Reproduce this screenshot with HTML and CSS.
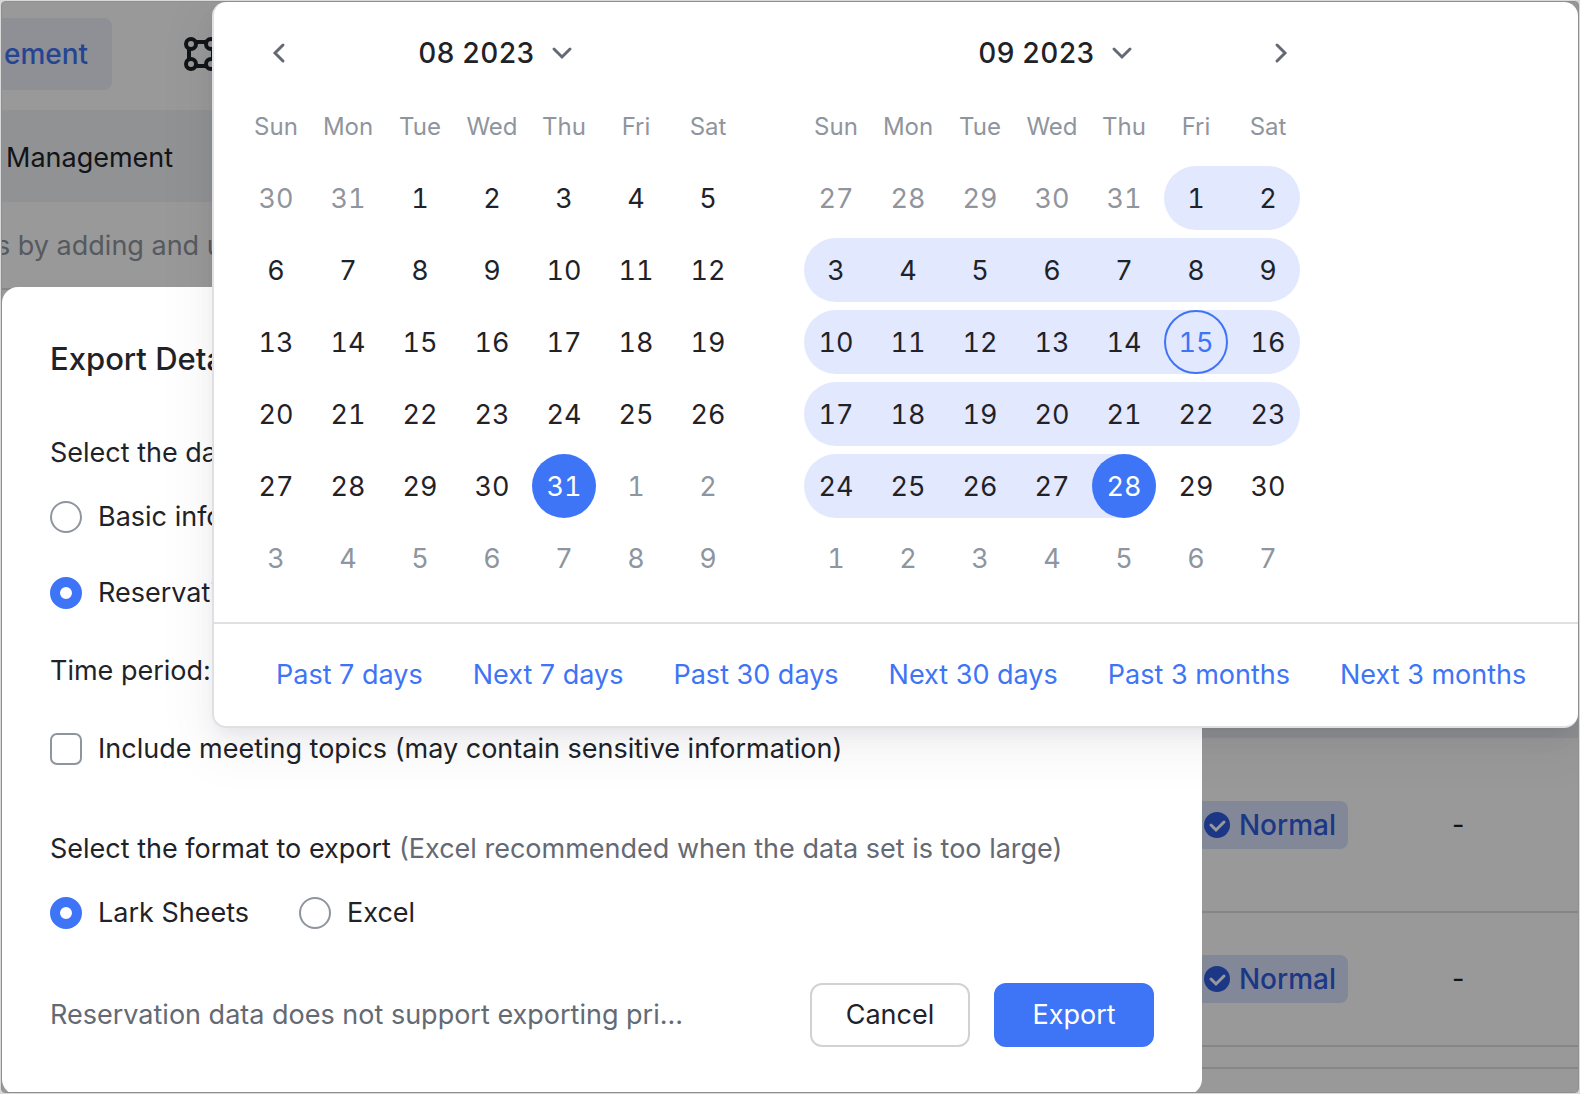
FILE: index.html
```html
<!DOCTYPE html>
<html lang="en">
<head>
    <meta charset="UTF-8">
    <meta name="viewport" content="width=device-width, initial-scale=1.0">
    <title>Export Details</title>
    <link rel="stylesheet" href="styles.css">
</head>
<body>
    <div class="frame">
        <div class="app">
            <nav class="topbar">
                <a class="nav-item active" href="#">ement</a>
                <svg class="nav-icon" viewBox="0 0 34 34" aria-hidden="true">
                    <path d="M11 5h12M11 29h12M5 11v12M29 11v12"/>
                    <circle cx="7" cy="7" r="5"/>
                    <circle cx="27" cy="7" r="5"/>
                    <circle cx="7" cy="27" r="5"/>
                    <circle cx="27" cy="27" r="5"/>
                </svg>
            </nav>
            <div class="subbar">Management</div>
            <p class="description">s by adding and u</p>

            <table class="rooms">
                <thead>
                    <tr><th></th><th class="col-note"></th></tr>
                </thead>
                <tbody>
                    <tr class="row-first">
                        <td>
                            <span class="badge">
                                <svg viewBox="0 0 26 26" aria-hidden="true"><circle cx="13" cy="13" r="13"/><path d="M7 13l5 5 8-8"/></svg>
                                Normal
                            </span>
                        </td>
                        <td class="col-note">-</td>
                    </tr>
                    <tr>
                        <td>
                            <span class="badge">
                                <svg viewBox="0 0 26 26" aria-hidden="true"><circle cx="13" cy="13" r="13"/><path d="M7 13l5 5 8-8"/></svg>
                                Normal
                            </span>
                        </td>
                        <td class="col-note">-</td>
                    </tr>
                </tbody>
            </table>
            <div class="pager"></div>
        </div>

        <div class="mask"></div>

        <form class="dialog">
            <h1>Export Details</h1>

            <div class="group-label">Select the data</div>
            <label class="option"><input type="radio" name="data"> Basic info</label>
            <label class="option"><input type="radio" name="data" checked> Reservation</label>
            <div class="period">Time period:</div>
            <label class="option"><input type="checkbox"> Include meeting topics (may contain sensitive information)</label>

            <div class="group-label format">
                <span>Select the format to export</span>
                <span class="hint">(Excel recommended when the data set is too large)</span>
            </div>
            <div class="option-row">
                <label class="option"><input type="radio" name="format" checked> Lark Sheets</label>
                <label class="option"><input type="radio" name="format"> Excel</label>
            </div>

            <div class="dialog-footer">
                <span class="note">Reservation data does not support exporting pri...</span>
                <button type="button" class="btn">Cancel</button>
                <button type="button" class="btn primary">Export</button>
            </div>
        </form>

        <div class="picker">
            <div class="months">
                <section class="month">
                    <div class="month-header">
                        <button class="arrow prev" aria-label="Previous month">
                            <svg viewBox="0 0 32 32"><path d="M23 8l-8 8 8 8"/></svg>
                        </button>
                        <button class="month-title">08 2023
                            <svg viewBox="0 0 32 32"><path d="M8 12l8 8 8-8"/></svg>
                        </button>
                    </div>
                    <table class="calendar" id="august"></table>
                </section>
                <section class="month">
                    <div class="month-header">
                        <button class="month-title">09 2023
                            <svg viewBox="0 0 32 32"><path d="M8 12l8 8 8-8"/></svg>
                        </button>
                        <button class="arrow next" aria-label="Next month">
                            <svg viewBox="0 0 32 32"><path d="M13 8l8 8-8 8"/></svg>
                        </button>
                    </div>
                    <table class="calendar" id="september"></table>
                </section>
            </div>
            <div class="shortcuts">
                <a href="#">Past 7 days</a>
                <a href="#">Next 7 days</a>
                <a href="#">Past 30 days</a>
                <a href="#">Next 30 days</a>
                <a href="#">Past 3 months</a>
                <a href="#">Next 3 months</a>
            </div>
        </div>
    </div>

    <script>
        const weekdays = ['Sun', 'Mon', 'Tue', 'Wed', 'Thu', 'Fri', 'Sat'];
        const rangeStart = new Date(2023, 7, 31);
        const rangeEnd = new Date(2023, 8, 28);
        const today = new Date(2023, 8, 15);

        function sameDay(a, b) {
            return a.toDateString() === b.toDateString();
        }

        function renderMonth(id, year, month) {
            const firstWeekday = new Date(year, month, 1).getDay();
            let html = '<thead><tr>' + weekdays.map(d => `<th>${d}</th>`).join('') + '</tr></thead><tbody>';

            for (let week = 0; week < 6; week++) {
                html += '<tr>';
                for (let col = 0; col < 7; col++) {
                    const date = new Date(year, month, 1 - firstWeekday + week * 7 + col);
                    const classes = ['day'];

                    if (date.getMonth() !== month) {
                        classes.push('outside');
                    } else {
                        const isStart = sameDay(date, rangeStart);
                        const isEnd = sameDay(date, rangeEnd);
                        if (date > rangeStart && date <= rangeEnd) {
                            classes.push('in-range');
                            if (col === 0 || date.getDate() === 1) classes.push('range-left');
                            if (col === 6 || isEnd) classes.push('range-right');
                        }
                        if (isStart || isEnd) classes.push('selected');
                        if (sameDay(date, today)) classes.push('today');
                    }
                    html += `<td><button class="${classes.join(' ')}"><span>${date.getDate()}</span></button></td>`;
                }
                html += '</tr>';
            }
            document.getElementById(id).innerHTML = html + '</tbody>';
        }

        renderMonth('august', 2023, 7);
        renderMonth('september', 2023, 8);
    </script>
</body>
</html>
```
FILE: styles.css
```css
* {
    box-sizing: border-box;
}

body {
    margin: 0;
    padding: 1px;
    background: #d9d9d9;
    color: #1f2329;
    font-family: Inter, "Liberation Sans", sans-serif;
    font-size: 27px;
    line-height: 40px;
}

button {
    font: inherit;
    color: inherit;
    background: none;
    border: none;
    padding: 0;
    cursor: pointer;
}

a {
    color: #3e74f6;
    text-decoration: none;
}

.frame {
    position: relative;
    min-height: calc(100vh - 2px);
    border: 1px solid #8f8f8f;
    border-radius: 4px;
    overflow: hidden;
    background: #fff;
    display: flex;
}

/* page behind the dialog, scrolled slightly past the left edge */
.app {
    flex: 1;
    display: flex;
    flex-direction: column;
    margin-left: -8px;
}

.topbar {
    display: flex;
    align-items: center;
    gap: 72px;
    height: 108px;
    padding-bottom: 4px;
}

.nav-item {
    padding: 16px 24px 16px 10px;
    border-radius: 8px;
    font-size: 28px;
    font-weight: 500;
}

.nav-item.active {
    background: #eff1fa;
}

.nav-icon {
    width: 34px;
    height: 34px;
    fill: none;
    stroke: #1f2329;
    stroke-width: 4;
}

.subbar {
    height: 92px;
    padding: 28px 12px;
    background: #f0f3f6;
}

.description {
    margin: 0;
    padding: 24px 2px 22px;
    color: #8f959e;
    border-bottom: 2px solid #dee0e3;
}

.rooms {
    width: 100%;
    margin-top: auto;
    border-collapse: collapse;
}

.rooms th {
    height: 80px;
    background: #eff1f4;
}

.rooms td {
    height: 134px;
    padding: 0;
    text-align: right;
    border-bottom: 2px solid #dee0e3;
}

.rooms .row-first td {
    height: 174px;
}

.rooms .col-note {
    width: 230px;
    padding-left: 104px;
    text-align: left;
}

.badge {
    display: inline-flex;
    align-items: center;
    gap: 9px;
    height: 48px;
    padding: 0 12px;
    border-radius: 8px;
    background: #dae3fd;
    color: #2d5ddf;
    font-size: 28px;
    font-weight: 500;
}

.badge svg {
    width: 26px;
    height: 26px;
    fill: #2d5ddf;
}

.badge path {
    fill: none;
    stroke: #fff;
    stroke-width: 3;
    stroke-linecap: round;
}

.pager {
    height: 45px;
    padding-top: 20px;
}

.pager::before {
    content: "";
    display: block;
    height: 2px;
    background: #dee0e3;
}

.mask {
    position: absolute;
    inset: 0;
    background: rgba(0, 0, 0, 0.4);
}

/* export dialog */
.dialog {
    position: absolute;
    top: 285px;
    left: 0;
    width: 1200px;
    max-width: 100%;
    padding: 48px;
    border-radius: 16px;
    background: #fff;
}

.dialog h1 {
    margin: 0 0 50px;
    font-size: 31px;
    line-height: 48px;
    font-weight: 500;
}

.group-label {
    margin-bottom: 24px;
}

.group-label.format {
    display: flex;
    gap: 8px;
    margin: 60px 0 24px;
}

.hint,
.note {
    color: #646a73;
}

.option {
    display: flex;
    align-items: center;
    gap: 16px;
    margin-bottom: 36px;
}

.option-row {
    display: flex;
    gap: 50px;
}

.period {
    margin: 38px 0;
}

.option input {
    appearance: none;
    width: 32px;
    height: 32px;
    margin: 0;
    border: 2px solid #8f959e;
    border-radius: 50%;
    background: #fff;
}

.option input[type="checkbox"] {
    border-radius: 7px;
}

.option input:checked {
    border: 10px solid #3e74f6;
}

.dialog-footer {
    display: flex;
    align-items: center;
    gap: 24px;
    margin-top: 14px;
}

.note {
    flex: 1;
}

.btn {
    width: 160px;
    height: 64px;
    border: 2px solid #d0d3d6;
    border-radius: 12px;
    background: #fff;
}

.btn.primary {
    border-color: #3e74f6;
    background: #3e74f6;
    color: #fff;
}

/* date range picker */
.picker {
    position: absolute;
    top: 0;
    left: 210px;
    right: 0;
    border: 2px solid #dee0e3;
    border-width: 0 0 2px 2px;
    border-radius: 14px;
    background: #fff;
    box-shadow: 0 16px 48px 16px rgba(31, 35, 41, 0.04),
                0 12px 24px rgba(31, 35, 41, 0.04),
                0 8px 16px -8px rgba(31, 35, 41, 0.06);
}

.months {
    display: flex;
    gap: 56px;
    padding: 14px 26px 28px;
}

.month {
    width: 504px;
}

.month-header {
    display: grid;
    grid-template-columns: 72px 1fr 72px;
    align-items: center;
    height: 74px;
}

.month-header svg {
    display: block;
    width: 32px;
    height: 32px;
    fill: none;
    stroke: #646a73;
    stroke-width: 3;
    stroke-linecap: round;
}

.arrow {
    justify-self: center;
}

.arrow.next {
    justify-self: end;
    padding-right: 8px;
}

.month-title {
    grid-column: 2;
    justify-self: center;
    display: flex;
    align-items: center;
    gap: 11px;
    padding-left: 12px;
    font-size: 28px;
    font-weight: 500;
    font-variant-numeric: tabular-nums;
}

.calendar {
    width: 100%;
    table-layout: fixed;
    border-collapse: collapse;
    font-variant-numeric: tabular-nums;
}

.calendar th {
    height: 72px;
    padding: 2px 0 0;
    color: #8f959e;
    font-size: 24px;
    font-weight: 400;
}

.calendar td {
    height: 72px;
    padding: 0;
}

.day {
    display: flex;
    justify-content: center;
    width: 72px;
    height: 64px;
}

.day span {
    width: 64px;
    height: 64px;
    border-radius: 50%;
    line-height: 66px;
}

.day.outside {
    color: #8f959e;
}

.day.in-range {
    background: #e2e8fd;
}

.day.range-left {
    width: 68px;
    margin-left: 4px;
    padding-right: 4px;
    border-radius: 32px 0 0 32px;
}

.day.range-right {
    width: 68px;
    padding-left: 4px;
    border-radius: 0 32px 32px 0;
}

.day.selected span {
    background: #3e74f6;
    color: #fff;
}

.day.today span {
    border: 2px solid #3e74f6;
    color: #3e74f6;
    line-height: 62px;
}

.shortcuts {
    display: flex;
    gap: 50px;
    padding: 31px 48px 31px 62px;
    border-top: 2px solid #dee0e3;
    white-space: nowrap;
}
```
